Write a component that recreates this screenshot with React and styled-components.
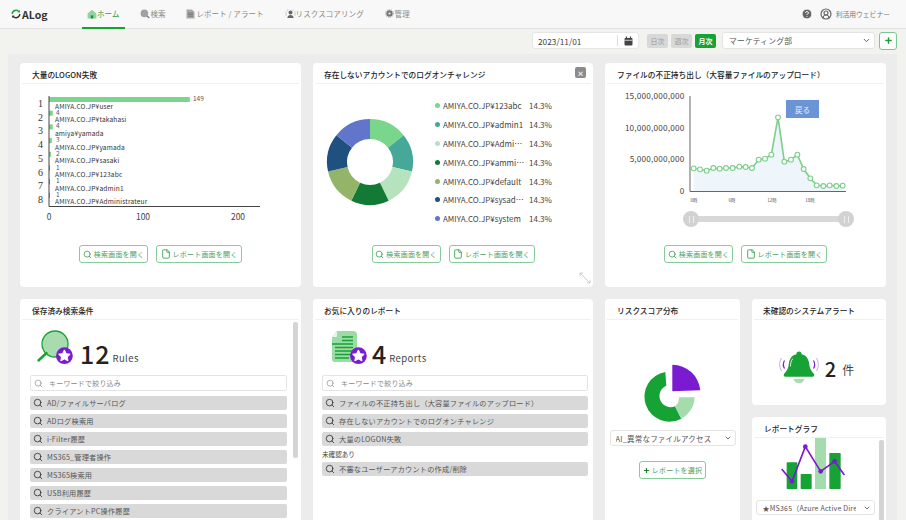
import React from "react";
import styled, { createGlobalStyle } from "styled-components";
import { Search, File, Plus, ChevronDown, CircleHelp, CircleUserRound } from "lucide-react";

const GREEN = "#17a235";
const PURPLE = "#7a1bd2";
const FONT = `"Noto Sans CJK JP", "Noto Sans", sans-serif`;

const Global = createGlobalStyle`
  html, body { margin: 0; padding: 0; background: #f2f3ee; }
  * { box-sizing: border-box; }
  body { font-family: ${FONT}; color: #333; }
`;

const Page = styled.div`
  width: 906px;
  height: 520px;
  overflow: hidden;
  display: flex;
  flex-direction: column;
`;

const Header = styled.header`
  height: 29px;
  flex: none;
  display: flex;
  align-items: stretch;
  padding: 0 16px 0 11px;
  background: #f8f8f8;
  border-bottom: 1px solid #e2e2e2;
`;

const Logo = styled.div`
  display: flex;
  align-items: center;
  gap: 1px;
  width: 71px;
  font-size: 10.5px;
  font-weight: 700;
  color: #333;
`;

const Nav = styled.nav`
  display: flex;
  gap: 10.8px;
`;

const Tab = styled.div`
  display: flex;
  align-items: center;
  height: 29px;
  padding: 0 5px;
  font-size: 7.5px;
  letter-spacing: 0.1px;
  color: ${(p) => (p.$active ? "#2f9c4a" : "#8a8a8a")};
  border-bottom: 2px solid ${(p) => (p.$active ? GREEN : "transparent")};
`;

const UserBox = styled.div`
  margin-left: auto;
  display: flex;
  align-items: center;
  gap: 7px;
  font-size: 6.8px;
  color: #777;
`;

const User = styled.div`
  display: flex;
  align-items: center;
  gap: 4px;
`;

const Toolbar = styled.div`
  height: 25px;
  flex: none;
  display: flex;
  align-items: center;
  justify-content: flex-end;
  gap: 4px;
  padding: 0 9px 2px 0;
`;

const DateField = styled.div`
  width: 107px;
  height: 17px;
  margin-right: 2px;
  display: flex;
  align-items: center;
  background: #fff;
  border: 1px solid #e6e6e6;
  border-radius: 3px;
  font-size: 8.3px;
  color: #444;
`;

const DateText = styled.span`
  flex: 1;
  padding-left: 5px;
`;

const DateIcon = styled.span`
  width: 21px;
  height: 11px;
  display: flex;
  align-items: center;
  justify-content: center;
  border-left: 1px solid #ddd;
`;

const Period = styled.div`
  display: flex;
  gap: 3px;
  margin: 0 2px;
`;

const PeriodButton = styled.span`
  width: 21px;
  height: 14px;
  display: flex;
  align-items: center;
  justify-content: center;
  border-radius: 2px;
  font-size: 7px;
  background: ${(p) => (p.$active ? GREEN : "#d8d8d8")};
  color: ${(p) => (p.$active ? "#fff" : "#999")};
  font-weight: ${(p) => (p.$active ? 700 : 400)};
`;

const Select = styled.div`
  width: ${(p) => p.$width}px;
  height: ${(p) => p.$height || 16}px;
  margin-top: ${(p) => p.$top || 0}px;
  display: flex;
  align-items: center;
  justify-content: space-between;
  padding: 0 3px 0 ${(p) => p.$pad || 6}px;
  background: #fff;
  border: 1px solid #e4e4e4;
  border-radius: 3px;
  font-size: ${(p) => p.$size || 7.5}px;
  letter-spacing: 0.2px;
  color: #555;
  white-space: nowrap;
  overflow: hidden;
`;

const SelectText = styled.span`
  overflow: hidden;
  flex: 1;
  margin-right: 7px;
`;

const AddButton = styled.span`
  width: 18px;
  height: 18px;
  display: flex;
  align-items: center;
  justify-content: center;
  background: #fff;
  border: 1px solid #7cc792;
  border-radius: 3px;
  color: ${GREEN};
`;

const Panel = styled.main`
  flex: 1;
  margin: 0 9px 0 8px;
  padding: 9px 11px 0 12px;
  background: #ececec;
  display: flex;
  flex-direction: column;
  gap: 12px;
`;

const TopRow = styled.div`
  display: grid;
  grid-template-columns: 281px 280px 281px;
  gap: 12px;
`;

const BottomRow = styled.div`
  display: grid;
  grid-template-columns: 281px 280px 135px 134px;
  gap: 12px;
  height: 240px;
`;

const Column = styled.div`
  display: flex;
  flex-direction: column;
  gap: 12px;
  min-height: 0;
`;

const Card = styled.section`
  position: relative;
  background: #fff;
  border-radius: 4px;
  height: ${(p) => (p.$height ? `${p.$height}px` : "auto")};
  flex: ${(p) => (p.$grow ? 1 : "none")};
  overflow: hidden;
`;

const Title = styled.h3`
  margin: 0 2px;
  height: 21px;
  padding: 3px 0 0 ${(p) => p.$pad || 10}px;
  display: flex;
  align-items: center;
  font-size: 7.7px;
  font-weight: 500;
  color: #222;
  white-space: nowrap;
  border-bottom: 1px solid #f0f0f0;
`;

const ChartArea = styled.div`
  position: relative;
  height: 161px;
`;

const ChartSvg = styled.svg`
  display: block;
  font-family: ${FONT};
`;

const Actions = styled.div`
  display: flex;
  justify-content: center;
  gap: 8px;
  margin-top: ${(p) => p.$top || 0}px;
`;

const OutlineButton = styled.span`
  height: 18px;
  width: ${(p) => p.$width}px;
  display: flex;
  align-items: center;
  justify-content: center;
  gap: 2px;
  border: 1px solid #86cc9a;
  border-radius: 3px;
  background: #fff;
  font-size: 7px;
  letter-spacing: 0.2px;
  color: #4d9f66;
`;

const PieLayout = styled.div`
  height: 161px;
  display: flex;
`;

const Legend = styled.ul`
  list-style: none;
  margin: 0;
  padding: 12px 0 0;
  display: flex;
  flex-direction: column;
`;

const LegendRow = styled.li`
  height: 18.9px;
  display: flex;
  align-items: center;
  font-size: 8px;
  color: #444;
`;

const Dot = styled.i`
  width: 5px;
  height: 5px;
  margin-right: 3px;
  border-radius: 50%;
  background: ${(p) => p.$color};
`;

const LegendName = styled.span`
  width: 82px;
  margin-right: 4px;
  white-space: nowrap;
  overflow: hidden;
  text-overflow: ellipsis;
`;

const CloseButton = styled.span`
  position: absolute;
  top: 4px;
  right: 7px;
  width: 11px;
  height: 11px;
  display: flex;
  align-items: center;
  justify-content: center;
  border-radius: 2px;
  background: #8c8c8c;
  color: #fff;
  font-size: 7px;
  font-weight: 700;
`;

const ResizeMark = styled.svg`
  position: absolute;
  right: 2px;
  bottom: 3px;
`;

const BackButton = styled.span`
  position: absolute;
  top: 16px;
  left: 181px;
  width: 33px;
  height: 18px;
  display: flex;
  align-items: center;
  justify-content: center;
  background: #6b94d6;
  color: #e8eefa;
  font-size: 7.5px;
`;

const Slider = styled.div`
  position: absolute;
  left: 78px;
  top: 127px;
  width: 171px;
  height: 16px;
  display: flex;
  align-items: center;
  justify-content: space-between;
`;

const SliderTrack = styled.div`
  position: absolute;
  left: 8px;
  right: 8px;
  top: 5px;
  height: 6px;
  background: #d8d8d8;
`;

const SliderHandle = styled.span`
  position: relative;
  width: 16px;
  height: 16px;
  border-radius: 50%;
  background: #d2d2d2;
  display: flex;
  align-items: center;
  justify-content: center;
  &::after {
    content: "";
    width: 3px;
    height: 7px;
    border-left: 1px solid #eee;
    border-right: 1px solid #eee;
  }
`;

const ListBody = styled.div`
  position: relative;
  padding: ${(p) => p.$pad};
`;

const Scroll = styled.span`
  position: absolute;
  top: ${(p) => p.$top}px;
  right: ${(p) => p.$right}px;
  width: 5px;
  height: ${(p) => p.$height}px;
  border-radius: 2px;
  background: #d4d4d4;
`;

const Stat = styled.div`
  height: 45px;
  display: flex;
  align-items: flex-start;
  padding-left: ${(p) => p.$indent}px;
`;

const Count = styled.span`
  margin: 8px 2px 0 ${(p) => p.$gap}px;
  font-size: 25px;
  line-height: 30px;
  font-weight: 500;
  letter-spacing: 1px;
  color: #222;
`;

const Unit = styled.span`
  margin-top: 21px;
  font-size: 9.5px;
  line-height: 14px;
  letter-spacing: 0.4px;
  color: #444;
`;

const Filter = styled.div`
  height: 16px;
  display: flex;
  align-items: center;
  gap: 6px;
  padding-left: 3px;
  margin-bottom: 5px;
  border: 1px solid #e4e4e4;
  border-radius: 2px;
  font-size: 7px;
  letter-spacing: 0.2px;
  color: #888;
`;

const List = styled.ul`
  list-style: none;
  margin: 0;
  padding: 0;
  display: flex;
  flex-direction: column;
  gap: 4px;
`;

const Row = styled.li`
  height: 14px;
  flex: none;
  display: flex;
  align-items: center;
  gap: 4px;
  padding-left: 3px;
  background: #d9d9d9;
  border-radius: 2px;
  font-size: 7.2px;
  letter-spacing: 0.2px;
  color: #555;
  white-space: nowrap;
`;

const Unread = styled.p`
  margin: 0;
  height: 16px;
  display: flex;
  align-items: center;
  font-size: 6.6px;
  color: #444;
`;

const Center = styled.div`
  display: flex;
  flex-direction: column;
  align-items: center;
  padding: ${(p) => p.$top}px ${(p) => p.$right || 0}px 0 0;
`;

const AlertBody = styled.div`
  display: flex;
  align-items: center;
  justify-content: center;
  gap: 5px;
  height: 85px;
  padding: 12px 6px 0 0;
`;

const AlertCount = styled.span`
  font-size: 20px;
  font-weight: 500;
  color: #222;
`;

const AlertUnit = styled.span`
  margin: 2px 0 0 1px;
  font-size: 12px;
  color: #444;
`;

const failures = [
  ["AMIYA.CO.JP¥user", 149],
  ["AMIYA.CO.JP¥takahasi", 4],
  ["amiya¥yamada", 4],
  ["AMIYA.CO.JP¥yamada", 3],
  ["AMIYA.CO.JP¥sasaki", 2],
  ["AMIYA.CO.JP¥123abc", 1],
  ["AMIYA.CO.JP¥admin1", 1],
  ["AMIYA.CO.JP¥Administrateur", 1],
];

const accounts = [
  ["AMIYA.CO.JP¥123abc", "#7ad68a"],
  ["AMIYA.CO.JP¥admin1", "#45a899"],
  ["AMIYA.CO.JP¥Administrator", "#b4e3bd"],
  ["AMIYA.CO.JP¥ammiuser", "#137a35"],
  ["AMIYA.CO.JP¥default", "#93b56a"],
  ["AMIYA.CO.JP¥sysadmin", "#1f5180"],
  ["AMIYA.CO.JP¥system", "#6275cc"],
];

// chart values are read off the picture, in crop coordinates (3x)
const uploadY = [325, 328, 332, 324, 326, 324, 324, 320, 321, 324, 299, 296, 284, 172, 305, 299, 284, 327, 355, 376, 378, 376, 378, 377];
const uploadX = [281, 300, 320, 340, 359, 378, 398, 418, 437, 456, 476, 495, 514, 534, 553, 573, 592, 611, 631, 650, 670, 689, 709, 728];

const savedRules = ["AD/ファイルサーバログ", "ADログ検索用", "i-Filter履歴", "MS365_管理者操作", "MS365検索用", "USB利用履歴", "クライアントPC操作履歴"];
const favourites = ["ファイルの不正持ち出し（大容量ファイルのアップロード）", "存在しないアカウントでのログオンチャレンジ", "大量のLOGON失敗"];

const donutSlice = (cx, cy, r0, r1, from, to) => {
  const pt = (r, a) => `${(cx + r * Math.sin(a)).toFixed(2)} ${(cy - r * Math.cos(a)).toFixed(2)}`;
  return `M${pt(r1, from)} A${r1} ${r1} 0 0 1 ${pt(r1, to)} L${pt(r0, to)} A${r0} ${r0} 0 0 0 ${pt(r0, from)} Z`;
};

const ReportActions = () => (
  <Actions>
    <OutlineButton $width={69}>
      <Search size={9} strokeWidth={2} color="#2d9a4e" />
      検索画面を開く
    </OutlineButton>
    <OutlineButton $width={86}>
      <File size={10} strokeWidth={2} color="#2d9a4e" />
      レポート画面を開く
    </OutlineButton>
  </Actions>
);

const HomeIcon = () => (
  <svg width="10" height="10" viewBox="0 0 10 10">
    <path d="M5 .8 .6 4.6v4.8h8.8V4.6z" fill="#8fd39f" />
    <rect x="3.8" y="6.4" width="2.4" height="3" fill="#1d8f3c" />
  </svg>
);

const NavSearchIcon = () => (
  <svg width="10" height="10" viewBox="0 0 10 10">
    <circle cx="4.4" cy="4.4" r="3.8" fill="#a2a2a2" />
    <path d="M7 7l2.4 2" stroke="#777" strokeWidth="1.2" />
  </svg>
);

const NavReportIcon = () => (
  <svg width="10" height="10" viewBox="0 0 10 10">
    <path d="M.5.5H6L8.500 3v6.500h-8z" fill="#a8a8a8" />
    <path d="M2 4h5M2 5.6h5M2 7.200h5" stroke="#666" strokeWidth=".7" />
  </svg>
);

const NavRiskIcon = () => (
  <svg width="11" height="10" viewBox="0 0 11 10">
    <circle cx="5.5" cy="3.4" r="2" fill="#666" />
    <path d="M2.4 9c0-2 1.4-3 3.1-3s3.1 1 3.1 3z" fill="#666" />
    <path d="M1 6.5v-4M10 6.5v-4M2.2 1.2h1.4M7.4 1.2h1.4" stroke="#999" strokeWidth=".8" strokeDasharray="1 .6" />
  </svg>
);

const NavGearIcon = () => (
  <svg width="10" height="9" viewBox="0 0 10 9">
    <circle cx="4.5" cy="4.5" r="3.2" fill="#777" />
    <circle cx="4.5" cy="4.5" r="4" fill="none" stroke="#aaa" strokeWidth="1" strokeDasharray="1.2 1" />
    <circle cx="4.5" cy="4.5" r="1.1" fill="#eee" />
  </svg>
);

const LogoMark = () => (
  <svg width="10" height="10" viewBox="0 0 10 10" fill="none" strokeWidth="1.4">
    <path d="M1.2 5A3.8 3.8 0 0 1 8 2.8" stroke={GREEN} />
    <path d="M8.8 5A3.8 3.8 0 0 1 2 7.2" stroke="#333" />
    <path d="M6.4 3.2 9 3.6 8.8.9z" fill={GREEN} stroke="none" />
    <path d="M3.6 6.8 1 6.4 1.2 9.1z" fill="#333" stroke="none" />
  </svg>
);

const CalendarIcon = () => (
  <svg width="9" height="10" viewBox="0 0 9 10">
    <rect x=".5" y="2" width="8" height="7.5" rx="1" fill="#444" />
    <path d="M2.5.5V3M6.5.5V3" stroke="#444" strokeWidth="1.2" />
    <path d="M.5 4.3h8" stroke="#fff" strokeWidth=".7" />
  </svg>
);

const BadgeStar = ({ x, y }) => (
  <>
    <circle cx={x} cy={y} r="8.4" fill={PURPLE} />
    <path
      transform={`translate(${x} ${y})`}
      d="M0-5.8 1.8-2 5.8-1.5 2.9 1.3 3.6 5.2 0 3.3-3.6 5.2-2.9 1.3-5.8-1.5-1.8-2z"
      fill="#fff"
      stroke="#fff"
      strokeLinejoin="round"
    />
  </>
);

const RulesIcon = () => (
  <svg width="44" height="36" viewBox="0 0 44 36">
    <circle cx="19" cy="14" r="13" fill="#a8dcae" stroke={GREEN} strokeWidth="1.3" />
    <path d="M10.5 23 2.5 30.5" stroke={GREEN} strokeWidth="2.4" strokeLinecap="round" />
    <BadgeStar x={28.4} y={25.7} />
  </svg>
);

const ReportsIcon = () => (
  <svg width="37" height="36" viewBox="0 0 37 36">
    <path d="M6 1h16a4 4 0 0 1 4 4v24a3 3 0 0 1-3 3H4a3 3 0 0 1-3-3V7z" fill="#9bdba5" />
    <path d="M1 7h4a1 1 0 0 0 1-1V1z" fill="#e6f6e9" />
    <path d="M11 7h11M11 10.5h11M1 14h21M4 17.5h18M4 21h18M4 24.5h16M4 28h14" stroke={GREEN} strokeWidth="1.4" />
    <BadgeStar x={27.4} y={25.7} />
  </svg>
);

const BellIcon = () => (
  <svg width="42" height="35" viewBox="0 0 42 35" fill="none">
    <path d="M3.5 7a13 13 0 0 0 0 13M38.5 7a13 13 0 0 1 0 13" stroke="#cda6ee" strokeWidth="1" />
    <path d="M6.500 9.500a8 8 0 0 0 0 8M35.500 9.500a8 8 0 0 1 0 8" stroke={PURPLE} strokeWidth="1.2" />
    <circle cx="21" cy="3" r="2.6" fill={GREEN} />
    <path d="M21 3c-6.500 0-9.500 4-10.200 10-.5 5-2.600 7.300-4.600 9.800-1 1.300-.4 3 1.400 3h26.800c1.800 0 2.400-1.700 1.400-3-2-2.500-4.100-4.800-4.600-9.800C30.500 7 27.500 3 21 3z" fill={GREEN} />
    <path d="M14.500 8c-1.500 2-2 4.500-2 7" stroke="#d9f2dd" strokeWidth="1" strokeLinecap="round" />
    <path d="M15.500 28h11c-.6 2.600-2.600 4.200-5.500 4.200s-4.900-1.600-5.500-4.200z" fill="#a8dcae" />
  </svg>
);

const RiskPie = () => (
  <svg width="60" height="60" viewBox="130 205 180 180">
    <path d="M197 232A75 75 0 1 0 245 372L226 335A32 32 0 1 1 200 273Z" fill={GREEN} />
    <path d="M226 335 245 372A75 75 0 0 0 285 308L238 308A32 32 0 0 1 226 335Z" fill="#a5dcae" />
    <path d="M218 210A85 85 0 0 1 302 287L218 290Z" fill={PURPLE} />
  </svg>
);

const ReportGraph = () => (
  <svg width="70" height="52" viewBox="110 430 210 156">
    <rect x="130" y="503" width="32" height="80" rx="2" fill={GREEN} />
    <rect x="172" y="538" width="33" height="45" rx="2" fill={GREEN} />
    <rect x="215" y="430" width="33" height="153" fill="#a5dcae" />
    <rect x="258" y="475" width="34" height="108" rx="2" fill={GREEN} />
    <path d="M115 523 146 560 186 456 232 530 274 500 303 541" fill="none" stroke={PURPLE} strokeWidth="5" />
    {[[146, 560], [186, 456], [232, 530], [274, 500]].map(([x, y]) => (
      <circle key={x} cx={x} cy={y} r="7" fill={PURPLE} />
    ))}
  </svg>
);

const BarChart = () => (
  <ChartSvg width="281" height="161" viewBox="20 84 281 161">
    {failures.map(([name, value], i) => {
      const y = 97 + i * 13.7;
      return (
        <g key={name}>
          <text x="40.5" y={y + 10} fontSize="10" textAnchor="middle" fontFamily="Liberation Serif, serif" fill="#333">{i + 1}</text>
          <rect x="49" y={y} width={value * 0.945} height="5" fill={i > 4 ? "#45a899" : "#7ad68a"} />
          <text x={value > 100 ? 193 : 56} y={y + 4} fontSize="6.5" fill="#555">{value}</text>
          <text x="55" y={y + 11.5} fontSize="6.6" letterSpacing=".15" fill="#333">{name}</text>
        </g>
      );
    })}
    <path d="M49 96V206.5H260" fill="none" stroke="#444" strokeWidth="1" />
    {[[49, 0], [143, 100], [238, 200]].map(([x, v]) => (
      <text key={v} x={x} y="220" fontSize="8.5" textAnchor="middle" fill="#444">{v}</text>
    ))}
  </ChartSvg>
);

const Donut = () => (
  <ChartSvg width="122" height="161" viewBox="313 84 122 161">
    {accounts.map(([name, color], i) => {
      const step = (Math.PI * 2) / 7;
      return <path key={name} d={donutSlice(370, 162, 23, 43, i * step, (i + 1) * step)} fill={color} />;
    })}
  </ChartSvg>
);

const LineChart = () => {
  const pts = uploadX.map((x, i) => [600 + x / 3, 60 + uploadY[i] / 3]);
  const line = pts.map((p) => p.join(" ")).join(" L");
  return (
    <ChartSvg width="281" height="161" viewBox="605 84 281 161">
      <path d={`M${line} L${pts[pts.length - 1][0]} 191 L${pts[0][0]} 191 Z`} fill="#eef6fb" />
      <path d="M690 96V191.5H846" fill="none" stroke="#555" strokeWidth=".9" />
      <path d={`M${line}`} fill="none" stroke="#7ccf8a" strokeWidth="1.6" />
      {pts.map(([x, y]) => (
        <circle key={x} cx={x} cy={y} r="2.4" fill="#fff" stroke="#7ccf8a" strokeWidth="1.1" />
      ))}
      {[["15,000,000,000", 99], ["10,000,000,000", 130.5], ["5,000,000,000", 162], ["0", 194]].map(([t, y]) => (
        <text key={t} x="684.5" y={y} fontSize="8.2" letterSpacing=".2" textAnchor="end" fill="#444">{t}</text>
      ))}
      {[["0時", 694], ["6時", 732], ["12時", 772], ["18時", 810]].map(([t, x]) => (
        <text key={t} x={x} y="202" fontSize="4.5" textAnchor="middle" fill="#555">{t}</text>
      ))}
    </ChartSvg>
  );
};

const SearchRow = ({ children }) => (
  <Row>
    <Search size={10} strokeWidth={2} color="#333" />
    {children}
  </Row>
);

export default function App() {
  return (
    <Page>
      <Global />
      <Header>
        <Logo>
          <LogoMark />
          ALog
        </Logo>
        <Nav>
          <Tab $active><HomeIcon />ホーム</Tab>
          <Tab><NavSearchIcon />検索</Tab>
          <Tab><NavReportIcon />レポート / アラート</Tab>
          <Tab><NavRiskIcon />リスクスコアリング</Tab>
          <Tab><NavGearIcon />管理</Tab>
        </Nav>
        <UserBox>
          <CircleHelp size={12} fill="#666" color="#fff" strokeWidth={2} />
          <User>
            <CircleUserRound size={12} color="#666" strokeWidth={2.4} />
            利活用ウェビナー
          </User>
        </UserBox>
      </Header>
      <Toolbar>
        <DateField>
          <DateText>2023/11/01</DateText>
          <DateIcon><CalendarIcon /></DateIcon>
        </DateField>
        <Period>
          <PeriodButton>日次</PeriodButton>
          <PeriodButton>週次</PeriodButton>
          <PeriodButton $active>月次</PeriodButton>
        </Period>
        <Select $width={153} $height={17} $size={7.8}>
          <SelectText>マーケティング部</SelectText>
          <ChevronDown size={9} strokeWidth={2.5} />
        </Select>
        <AddButton><Plus size={9} strokeWidth={4} /></AddButton>
      </Toolbar>
      <Panel>
        <TopRow>
          <Card $height={224}>
            <Title>大量のLOGON失敗</Title>
            <ChartArea><BarChart /></ChartArea>
            <ReportActions />
          </Card>
          <Card $height={224}>
            <Title $pad={9}>存在しないアカウントでのログオンチャレンジ</Title>
            <CloseButton>×</CloseButton>
            <PieLayout>
              <Donut />
              <Legend>
                {accounts.map(([name, color]) => (
                  <LegendRow key={name}>
                    <Dot $color={color} />
                    <LegendName>{name}</LegendName>
                    14.3%
                  </LegendRow>
                ))}
              </Legend>
            </PieLayout>
            <ReportActions />
            <ResizeMark width="12" height="12" viewBox="0 0 12 12" fill="none" stroke="#c4c4c4" strokeWidth=".8">
              <path d="M1 1l10 10M1 1h3M1 1v3M11 11H8M11 11V8" />
            </ResizeMark>
          </Card>
          <Card $height={224}>
            <Title>ファイルの不正持ち出し（大容量ファイルのアップロード）</Title>
            <ChartArea>
              <LineChart />
              <BackButton>戻る</BackButton>
              <Slider>
                <SliderTrack />
                <SliderHandle />
                <SliderHandle />
              </Slider>
            </ChartArea>
            <ReportActions />
          </Card>
        </TopRow>
        <BottomRow>
          <Card>
            <Title>保存済み検索条件</Title>
            <ListBody $pad="10px 14px 0 10px">
              <Scroll $top={2} $right={3} $height={136} />
              <Stat $indent={6}>
                <RulesIcon />
                <Count $gap={0}>12</Count>
                <Unit>Rules</Unit>
              </Stat>
              <Filter>
                <Search size={9} strokeWidth={1.5} color="#777" />
                キーワードで絞り込み
              </Filter>
              <List>
                {savedRules.map((r) => <SearchRow key={r}>{r}</SearchRow>)}
              </List>
            </ListBody>
          </Card>
          <Card>
            <Title $pad={9}>お気に入りのレポート</Title>
            <ListBody $pad="10px 5px 0 9px">
              <Stat $indent={9}>
                <ReportsIcon />
                <Count $gap={4}>4</Count>
                <Unit>Reports</Unit>
              </Stat>
              <Filter>
                <Search size={9} strokeWidth={1.5} color="#777" />
                キーワードで絞り込み
              </Filter>
              <List>
                {favourites.map((r) => <SearchRow key={r}>{r}</SearchRow>)}
              </List>
              <Unread>未確認あり</Unread>
              <List>
                <SearchRow>不審なユーザーアカウントの作成/削除</SearchRow>
              </List>
            </ListBody>
          </Card>
          <Card>
            <Title>リスクスコア分布</Title>
            <Center $top={43}>
              <RiskPie />
              <Select $width={126} $height={16} $pad={5} $top={7}>
                <SelectText>AI_異常なファイルアクセス</SelectText>
                <ChevronDown size={8} strokeWidth={2.5} />
              </Select>
              <Actions $top={15}>
                <OutlineButton $width={67}>
                  <Plus size={7} strokeWidth={4} color="#17802f" />
                  レポートを選択
                </OutlineButton>
              </Actions>
            </Center>
          </Card>
          <Column>
            <Card $height={106}>
              <Title $pad={9}>未確認のシステムアラート</Title>
              <AlertBody>
                <BellIcon />
                <AlertCount>2</AlertCount>
                <AlertUnit>件</AlertUnit>
              </AlertBody>
            </Card>
            <Card $grow>
              <Title>レポートグラフ</Title>
              <Scroll $top={23} $right={2} $height={90} />
              <Center $top={0} $right={8}>
                <ReportGraph />
                <Select $width={119} $height={15} $size={7} $pad={6} $top={10}>
                  <SelectText>★MS365（Azure Active Directory）</SelectText>
                  <ChevronDown size={8} strokeWidth={2.5} />
                </Select>
              </Center>
            </Card>
          </Column>
        </BottomRow>
      </Panel>
    </Page>
  );
}
